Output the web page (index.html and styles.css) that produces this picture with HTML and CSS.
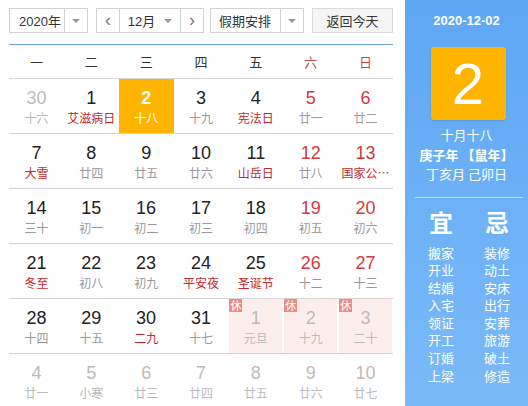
FILE: index.html
```html
<!DOCTYPE html>
<html lang="zh">
<head>
<meta charset="utf-8">
<title>万年历</title>
<link rel="stylesheet" href="styles.css">
</head>
<body>
<div class="app">
  <div class="main">
    <div class="toolbar">
      <div class="select year"><span class="sel-text">2020年</span><span class="sel-arrow"><i class="tri"></i></span></div>
      <div class="month-group">
        <span class="nav">&lsaquo;</span>
        <span class="month"><span class="sel-text">12月</span><i class="tri"></i></span>
        <span class="nav">&rsaquo;</span>
      </div>
      <div class="select holiday"><span class="sel-text">假期安排</span><span class="sel-arrow"><i class="tri"></i></span></div>
      <div class="today-btn">返回今天</div>
    </div>
    <div class="week">
      <span>一</span><span>二</span><span>三</span><span>四</span><span>五</span><span class="we">六</span><span class="we">日</span>
    </div>
    <div class="grid">
      <div class="row">
        <div class="cell other"><b>30</b><em>十六</em></div>
        <div class="cell"><b>1</b><em class="fest">艾滋病日</em></div>
        <div class="cell sel"><b>2</b><em>十八</em></div>
        <div class="cell"><b>3</b><em>十九</em></div>
        <div class="cell"><b>4</b><em class="fest">宪法日</em></div>
        <div class="cell wk"><b>5</b><em>廿一</em></div>
        <div class="cell wk"><b>6</b><em>廿二</em></div>
      </div>
      <div class="row">
        <div class="cell"><b>7</b><em class="fest">大雪</em></div>
        <div class="cell"><b>8</b><em>廿四</em></div>
        <div class="cell"><b>9</b><em>廿五</em></div>
        <div class="cell"><b>10</b><em>廿六</em></div>
        <div class="cell"><b>11</b><em class="fest">山岳日</em></div>
        <div class="cell wk"><b>12</b><em>廿八</em></div>
        <div class="cell wk"><b>13</b><em class="fest" title="国家公祭日">国家公…</em></div>
      </div>
      <div class="row">
        <div class="cell"><b>14</b><em>三十</em></div>
        <div class="cell"><b>15</b><em>初一</em></div>
        <div class="cell"><b>16</b><em>初二</em></div>
        <div class="cell"><b>17</b><em>初三</em></div>
        <div class="cell"><b>18</b><em>初四</em></div>
        <div class="cell wk"><b>19</b><em>初五</em></div>
        <div class="cell wk"><b>20</b><em>初六</em></div>
      </div>
      <div class="row">
        <div class="cell"><b>21</b><em class="fest">冬至</em></div>
        <div class="cell"><b>22</b><em>初八</em></div>
        <div class="cell"><b>23</b><em>初九</em></div>
        <div class="cell"><b>24</b><em class="fest">平安夜</em></div>
        <div class="cell"><b>25</b><em class="fest">圣诞节</em></div>
        <div class="cell wk"><b>26</b><em>十二</em></div>
        <div class="cell wk"><b>27</b><em>十三</em></div>
      </div>
      <div class="row">
        <div class="cell"><b>28</b><em>十四</em></div>
        <div class="cell"><b>29</b><em>十五</em></div>
        <div class="cell"><b>30</b><em class="fest">二九</em></div>
        <div class="cell"><b>31</b><em>十七</em></div>
        <div class="cell other rest"><span class="badge">休</span><b>1</b><em>元旦</em></div>
        <div class="cell other rest"><span class="badge">休</span><b>2</b><em>十九</em></div>
        <div class="cell other rest"><span class="badge">休</span><b>3</b><em>二十</em></div>
      </div>
      <div class="row last">
        <div class="cell other"><b>4</b><em>廿一</em></div>
        <div class="cell other"><b>5</b><em>小寒</em></div>
        <div class="cell other"><b>6</b><em>廿三</em></div>
        <div class="cell other"><b>7</b><em>廿四</em></div>
        <div class="cell other"><b>8</b><em>廿五</em></div>
        <div class="cell other"><b>9</b><em>廿六</em></div>
        <div class="cell other"><b>10</b><em>廿七</em></div>
      </div>
    </div>
  </div>
  <div class="side">
    <div class="side-date">2020-12-02</div>
    <div class="big-day">2</div>
    <div class="lunar">十月十八</div>
    <div class="ganzhi strong">庚子年 【鼠年】</div>
    <div class="ganzhi">丁亥月 己卯日</div>
    <div class="divider"></div>
    <div class="yiji">
      <div class="col">
        <div class="yj-title">宜</div>
        <div class="yj-item">搬家</div>
        <div class="yj-item">开业</div>
        <div class="yj-item">结婚</div>
        <div class="yj-item">入宅</div>
        <div class="yj-item">领证</div>
        <div class="yj-item">开工</div>
        <div class="yj-item">订婚</div>
        <div class="yj-item">上梁</div>
      </div>
      <div class="col">
        <div class="yj-title">忌</div>
        <div class="yj-item">装修</div>
        <div class="yj-item">动土</div>
        <div class="yj-item">安床</div>
        <div class="yj-item">出行</div>
        <div class="yj-item">安葬</div>
        <div class="yj-item">旅游</div>
        <div class="yj-item">破土</div>
        <div class="yj-item">修造</div>
      </div>
    </div>
  </div>
</div>
</body>
</html>
```

FILE: styles.css
```css
* { box-sizing: border-box; }
html, body { margin: 0; padding: 0; }
body {
  width: 528px;
  height: 406px;
  overflow: hidden;
  background: #fff;
  font-family: "Liberation Sans", "Noto Sans CJK SC", sans-serif;
  color: #333;
}
.app { display: flex; height: 406px; }
.main { width: 405px; padding: 8px 12px 0 9px; }

.toolbar { display: flex; height: 25px; gap: 8px; }
.select, .month-group, .today-btn {
  border: 1px solid #d2d2d2;
  height: 25px;
  display: flex;
  align-items: stretch;
  font-size: 13px;
  color: #333;
}
.select .sel-text { flex: 1; display: flex; align-items: center; padding-left: 9px; }
.sel-arrow { width: 23px; border-left: 1px solid #d2d2d2; display: flex; align-items: center; justify-content: center; }
.tri {
  display: inline-block;
  width: 0; height: 0;
  border-left: 4px solid transparent;
  border-right: 4px solid transparent;
  border-top: 4px solid #999;
}
.year { width: 79px; }
.month-group { width: 108px; margin-right: -2px; }
.nav {
  width: 22px;
  display: flex; align-items: center; justify-content: center;
  font-size: 18px; color: #777; line-height: 1;
  padding-bottom: 2px;
}
.month {
  width: 63px;
  border-left: 1px solid #d2d2d2;
  border-right: 1px solid #d2d2d2;
  display: flex; align-items: center; justify-content: center; gap: 9px;
}
.holiday { width: 94px; }
.holiday .sel-text { padding-left: 8px; }
.today-btn {
  width: 81px;
  background: #f5f5f5;
  justify-content: center; align-items: center;
  border-color: #dcdcdc;
}

.week {
  margin-top: 11px;
  border-top: 1px solid #6aa7d3;
  border-bottom: 1px solid #d8d8d8;
  height: 35px;
  display: grid;
  grid-template-columns: repeat(7, 1fr);
  align-items: center;
  font-size: 13px;
  color: #333;
}
.week span { text-align: center; padding-bottom: 1px; font-family: "Noto Sans CJK SC", sans-serif; }
.week .we { color: #c9474a; }

.grid { display: flex; flex-direction: column; }
.row {
  display: grid;
  grid-template-columns: repeat(7, 1fr);
  height: 55px;
  border-bottom: 1px solid #d4d4d4;
}
.row.last { border-bottom: none; }
.cell {
  position: relative;
  display: flex; flex-direction: column; align-items: center;
  padding-top: 8px;
  min-width: 0;
}
.cell b {
  font-weight: normal;
  font-size: 18px;
  line-height: 22px;
  color: #222;
}
.cell em {
  font-style: normal;
  font-size: 12px;
  line-height: 18px;
  color: #999;
  font-family: "Noto Sans CJK SC", sans-serif;
  white-space: nowrap;
}
.cell em.fest { color: #c2292e; }
.cell.wk b { color: #d2393f; }
.cell.other b { color: #bbb; }
.cell.other em { color: #bbb; }
.cell.sel { background: #ffb400; }
.cell.sel b { color: #fff; font-weight: bold; }
.cell.sel em { color: #fff; }
.cell.rest { background: #fdeeee; margin: 0 1px 0 1px; }
.badge {
  position: absolute;
  left: 0; top: 0;
  width: 13px; height: 13px;
  background: #f08a84;
  color: #fff;
  font-size: 11px;
  line-height: 13px;
  text-align: center;
  font-family: "Noto Sans CJK SC", sans-serif;
}

.side {
  width: 123px;
  height: 406px;
  background: linear-gradient(#5ea7f5, #7bbaf8);
  color: #fff;
  display: flex; flex-direction: column; align-items: center;
  font-family: "Noto Sans CJK SC", sans-serif;
}
.side-date {
  margin-top: 12px;
  font-family: "Liberation Sans", sans-serif;
  font-weight: bold;
  font-size: 13px;
  line-height: 18px;
}
.big-day {
  margin-top: 17px;
  margin-left: 3px;
  width: 75px; height: 73px;
  border-radius: 3px;
  background: #ffb400;
  font-family: "Liberation Sans", sans-serif;
  font-size: 58px;
  line-height: 73px;
  text-align: center;
  box-shadow: 0 1px 2px rgba(0,0,0,0.12);
}
.lunar { margin-top: 5px; font-size: 13px; line-height: 19.5px; }
.ganzhi { font-size: 13px; line-height: 19.5px; }
.ganzhi.strong { font-weight: bold; }
.divider {
  margin-top: 13px;
  width: 108px;
  height: 1px;
  background: rgba(255,255,255,0.55);
  margin-left: 5px;
}
.yiji { display: flex; width: 123px; padding: 0 3px 0 8px; margin-top: 8px; }
.col { width: 56px; display: flex; flex-direction: column; align-items: center; }
.yj-title { font-size: 24px; line-height: 32px; font-weight: bold; margin-bottom: 6px; }
.yj-item { font-size: 13px; line-height: 17.6px; }
```
